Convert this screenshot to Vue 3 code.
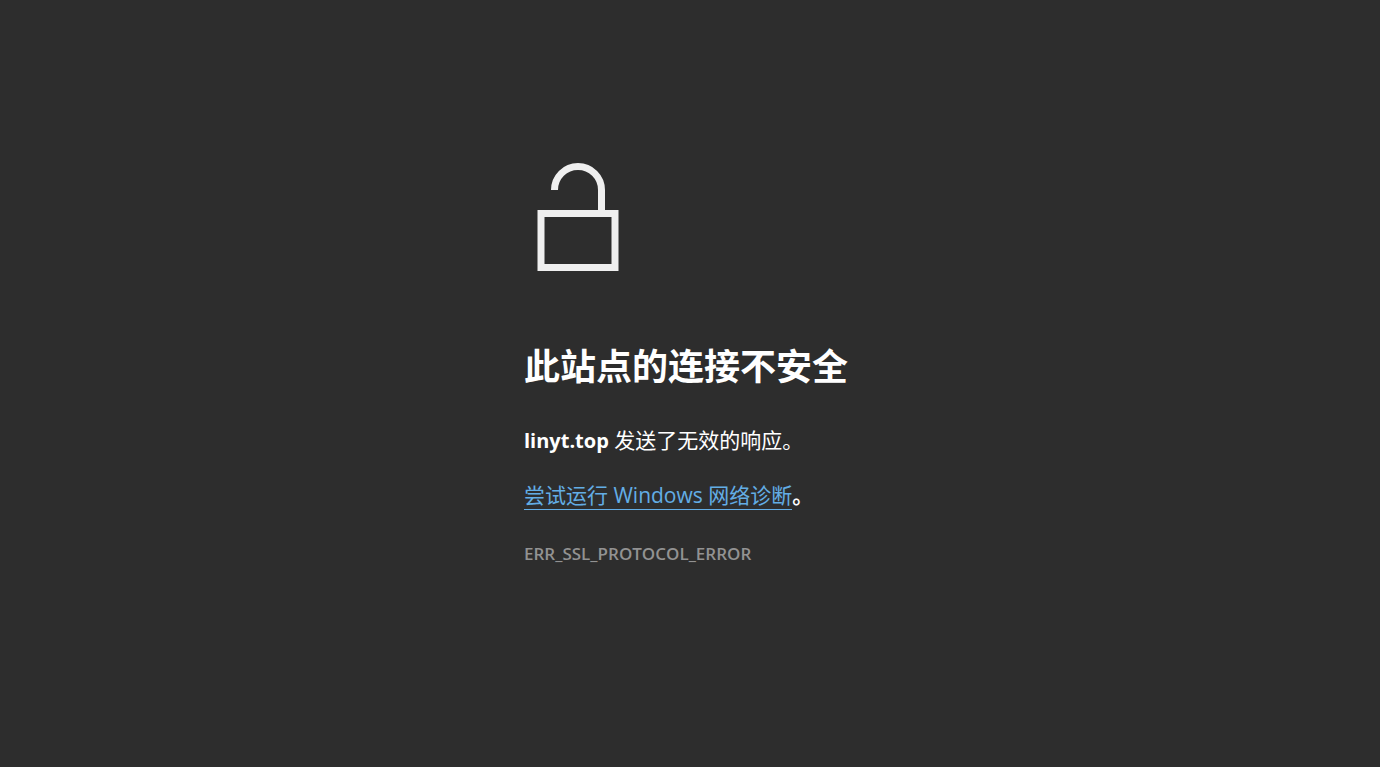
<script setup>
const host = 'linyt.top'
const errorCode = 'ERR_SSL_PROTOCOL_ERROR'
</script>

<template>
  <main class="page">
    <div class="content">
      <svg class="lock" viewBox="0 0 108 108" aria-hidden="true">
        <path d="M30.500 27a23.500 23.500 0 0 1 47 0V50" />
        <path d="M17 50.500h74v54H17z" />
      </svg>
      <h1>此站点的连接不安全</h1>
      <p class="message"><strong>{{ host }}</strong> 发送了无效的响应。</p>
      <p class="suggestion"><a href="#">尝试运行 Windows 网络诊断</a><b>。</b></p>
      <p class="code">{{ errorCode }}</p>
    </div>
  </main>
</template>

<style>
body {
  margin: 0;
  background: #2d2d2d;
}
</style>

<style scoped>
.page {
  display: flex;
  justify-content: center;
  align-items: center;
  min-height: 100vh;
  padding: 0 24px 39px;
  box-sizing: border-box;
  color: #fff;
  font-family: "Open Sans", "Noto Sans", "Noto Sans CJK SC", sans-serif;
}

.content {
  width: 100%;
  max-width: 332px;
}

.lock {
  display: block;
  width: 108px;
  height: 108px;
  fill: none;
  stroke: #efefef;
  stroke-width: 7;
}

h1 {
  margin: 68px 0 0;
  font-size: 36px;
  line-height: 56px;
  font-weight: 700;
  white-space: nowrap;
}

p {
  margin: 0;
  white-space: nowrap;
}

.message,
.suggestion {
  font-size: 21px;
  line-height: 28px;
}

.message {
  margin-top: 31px;
}

.message strong {
  font-size: 20px;
}

.suggestion {
  margin-top: 26px;
}

a {
  color: #63ade5;
  text-decoration: none;
  border-bottom: 1px solid #63ade5;
}

.code {
  margin-top: 33px;
  color: #929292;
  font-size: 17px;
  line-height: 24px;
  font-weight: 600;
}
</style>
